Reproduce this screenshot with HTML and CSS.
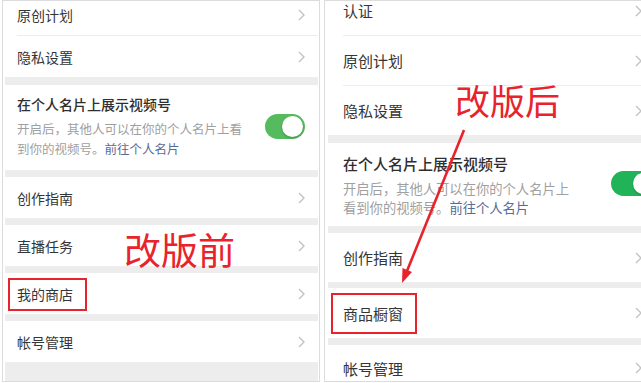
FILE: index.html
```html
<!DOCTYPE html>
<html lang="zh-CN">
  <head>
    <meta charset="UTF-8" />
    <meta name="viewport" content="width=device-width, initial-scale=1.0" />
    <title>视频号设置 改版前后</title>
    <link rel="stylesheet" href="styles.css">
  </head>
  <body>
    <div class="board">
      <!-- before -->
      <section class="phone old">
        <div class="list">
          <div class="cell first"><span class="label">原创计划</span><svg class="chev" viewBox="0 0 7 12"><polyline points="1,1 6,6 1,11" /></svg></div>
          <div class="divider"></div>
          <div class="cell"><span class="label">隐私设置</span><svg class="chev" viewBox="0 0 7 12"><polyline points="1,1 6,6 1,11" /></svg></div>
          <div class="band top"></div>
          <div class="toggle-card">
            <div class="toggle-text">
              <div class="toggle-title">在个人名片上展示视频号</div>
              <p class="toggle-desc">开启后，其他人可以在你的个人名片上看<br>到你的视频号。<span class="link">前往个人名片</span></p>
            </div>
            <span class="switch"><span class="knob"></span></span>
          </div>
          <div class="band"></div>
          <div class="cell"><span class="label">创作指南</span><svg class="chev" viewBox="0 0 7 12"><polyline points="1,1 6,6 1,11" /></svg></div>
          <div class="band"></div>
          <div class="cell"><span class="label">直播任务</span><svg class="chev" viewBox="0 0 7 12"><polyline points="1,1 6,6 1,11" /></svg></div>
          <div class="band"></div>
          <div class="cell"><span class="label">我的商店</span><svg class="chev" viewBox="0 0 7 12"><polyline points="1,1 6,6 1,11" /></svg></div>
          <div class="band"></div>
          <div class="cell"><span class="label">帐号管理</span><svg class="chev" viewBox="0 0 7 12"><polyline points="1,1 6,6 1,11" /></svg></div>
          <div class="band fill"></div>
        </div>
      </section>

      <!-- after -->
      <section class="phone new">
        <div class="list">
          <div class="cell first"><span class="label">认证</span><svg class="chev" viewBox="0 0 7 12"><polyline points="1,1 6,6 1,11" /></svg></div>
          <div class="divider"></div>
          <div class="cell"><span class="label">原创计划</span><svg class="chev" viewBox="0 0 7 12"><polyline points="1,1 6,6 1,11" /></svg></div>
          <div class="divider"></div>
          <div class="cell"><span class="label">隐私设置</span><svg class="chev" viewBox="0 0 7 12"><polyline points="1,1 6,6 1,11" /></svg></div>
          <div class="band top"></div>
          <div class="toggle-card">
            <div class="toggle-text">
              <div class="toggle-title">在个人名片上展示视频号</div>
              <p class="toggle-desc">开启后，其他人可以在你的个人名片上<br>看到你的视频号。<span class="link">前往个人名片</span></p>
            </div>
            <span class="switch"><span class="knob"></span></span>
          </div>
          <div class="band"></div>
          <div class="cell"><span class="label">创作指南</span><svg class="chev" viewBox="0 0 7 12"><polyline points="1,1 6,6 1,11" /></svg></div>
          <div class="band thin"></div>
          <div class="cell tall"><span class="label">商品橱窗</span><svg class="chev" viewBox="0 0 7 12"><polyline points="1,1 6,6 1,11" /></svg></div>
          <div class="band"></div>
          <div class="cell last"><span class="label">帐号管理</span><svg class="chev" viewBox="0 0 7 12"><polyline points="1,1 6,6 1,11" /></svg></div>
        </div>
      </section>

      <!-- annotations -->
      <span class="note note-before">改版前</span>
      <span class="note note-after">改版后</span>
      <span class="frame frame-before"></span>
      <span class="frame frame-after"></span>
      <svg class="arrow" viewBox="0 0 641 383">
        <line x1="464" y1="130" x2="407" y2="271" />
        <polygon points="402,283 412,272 402.5,268" />
      </svg>
    </div>
  </body>
</html>
```

FILE: styles.css
```css
* {
  margin: 0;
  padding: 0;
  box-sizing: border-box;
}

body {
  background: #fff;
  font-family: "Noto Sans CJK SC", "Noto Sans", sans-serif;
  color: #353535;
  overflow: hidden;
}

.board {
  position: relative;
  display: flex;
  gap: 4px;
  padding-left: 2px;
  width: 641px;
  height: 383px;
  overflow: hidden;
}

.phone {
  flex-shrink: 0;
  height: 382px;
  border: 1px solid #dcdcdc;
  background: #fff;
  overflow: hidden;
}

.phone.old {
  width: 318px;
  padding: 0 1px 0 2px;
}

.phone.new {
  width: 333px;
  padding-left: 3px;
}

.list {
  display: flex;
  flex-direction: column;
  height: 100%;
}

.cell {
  display: flex;
  align-items: center;
  justify-content: space-between;
  flex-shrink: 0;
  background: #fff;
}

.old .cell {
  height: 41px;
  padding: 0 13px 0 12px;
  font-size: 14px;
}

.new .cell {
  height: 49px;
  padding: 0 14px 0 15px;
  font-size: 15px;
}

.old .cell.first {
  margin-top: -7px;
}

.new .cell.first {
  margin-top: -15px;
}

.new .cell.tall {
  height: 50px;
}

.new .cell.last {
  height: 46px;
}

.chev {
  width: 7px;
  height: 12px;
  flex-shrink: 0;
}

.chev polyline {
  fill: none;
  stroke: #c2c2c2;
  stroke-width: 1.4;
}

.divider {
  height: 1px;
  flex-shrink: 0;
  background: #ececec;
}

.old .divider {
  margin-left: 12px;
}

.new .divider {
  margin-left: 15px;
}

.band {
  height: 7px;
  flex-shrink: 0;
  background: #ededed;
}

.band.top {
  height: 8px;
}

.band.thin {
  height: 6px;
}

.band.fill {
  flex: 1;
}

.toggle-card {
  display: flex;
  align-items: center;
  justify-content: space-between;
  flex-shrink: 0;
}

.old .toggle-card {
  height: 85px;
  padding: 0 13px 2px 12px;
}

.new .toggle-card {
  height: 83px;
  padding: 0 0 0 15px;
}

.toggle-title {
  font-weight: 500;
  color: #2f2f2f;
}

.old .toggle-title {
  font-size: 14px;
  line-height: 20px;
}

.new .toggle-title {
  font-size: 15px;
  line-height: 22px;
}

.toggle-desc {
  color: #a0a0a0;
}

.old .toggle-desc {
  margin-top: 5px;
  font-size: 12.5px;
  line-height: 20px;
}

.new .toggle-desc {
  margin-top: 4px;
  font-size: 13.3px;
  line-height: 19px;
}

.link {
  color: #576b95;
}

.switch {
  position: relative;
  flex-shrink: 0;
  border-radius: 13px;
}

.old .switch {
  width: 40px;
  height: 25px;
  background: #55bb5e;
}

.new .switch {
  width: 45px;
  height: 25px;
  margin-top: -3px;
  background: #20b358;
}

.knob {
  position: absolute;
  top: 2px;
  right: 2px;
  width: 21px;
  height: 21px;
  border-radius: 50%;
  background: #fff;
  box-shadow: 0 1px 2px rgba(0, 0, 0, 0.25);
}

.note {
  position: absolute;
  color: #e8232b;
  line-height: 1;
  white-space: nowrap;
}

.note-before {
  left: 124px;
  top: 231px;
  font-size: 37px;
}

.note-after {
  left: 455px;
  top: 82px;
  font-size: 35px;
}

.frame {
  position: absolute;
  border: 2px solid #e8232b;
}

.frame-before {
  left: 8px;
  top: 278px;
  width: 79px;
  height: 33px;
}

.frame-after {
  left: 331px;
  top: 293px;
  width: 86px;
  height: 41px;
}

.arrow {
  position: absolute;
  left: 0;
  top: 0;
  width: 641px;
  height: 383px;
  pointer-events: none;
}

.arrow line {
  stroke: #e8232b;
  stroke-width: 2.6;
}

.arrow polygon {
  fill: #e8232b;
}
```
